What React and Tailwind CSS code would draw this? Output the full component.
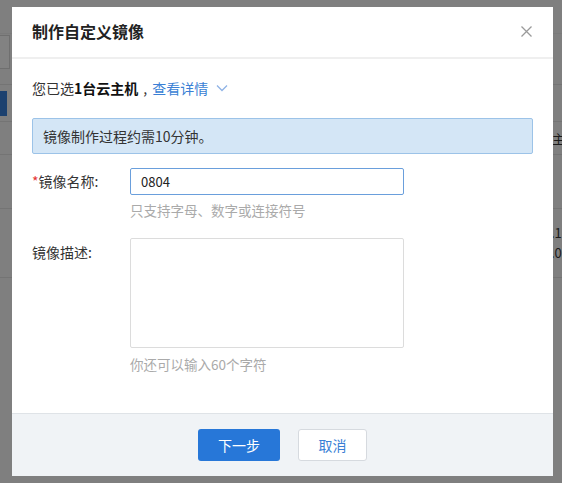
import React from "react";

const FONT = { fontFamily: '"Noto Sans CJK SC", "Noto Sans", sans-serif' };

function Chevron() {
  return (
    <svg width="12" height="8" viewBox="0 0 12 8" className="ml-[8px]">
      <path d="M1 1.5 L6 6.5 L11 1.5" fill="none" stroke="#8fb3e6" strokeWidth="1.3" />
    </svg>
  );
}

function CloseIcon() {
  return (
    <svg width="11" height="11" viewBox="0 0 11 11">
      <path d="M0.5 0.5 L10.5 10.5 M10.5 0.5 L0.5 10.5" stroke="#9a9a9a" strokeWidth="1.3" />
    </svg>
  );
}

function Background() {
  return (
    <div className="flex flex-col w-[562px] h-[483px] bg-[#7f7f7f] text-[13px] text-[#1a1a1a] overflow-hidden" style={FONT}>
      <div className="h-[34px] border-b border-[#7a7a7a]" />
      <div className="h-[50px] flex items-start pt-[1px]">
        <div className="w-[10px] h-[34px] border border-l-0 border-[#6f6f6f] bg-[#828282]" />
      </div>
      <div className="h-[37px] border-t border-[#747474] flex items-center">
        <div className="w-[7px] h-[25px] bg-[#1c416f]" />
      </div>
      <div className="h-[33px] border-t border-[#747474] flex items-center pl-[552px] leading-none whitespace-nowrap">主机</div>
      <div className="h-[54px] border-t border-[#747474]" />
      <div className="h-[69px] border-t border-[#747474] flex flex-col justify-center pl-[551px] leading-[20px] whitespace-nowrap">
        <span>.1</span>
        <span>.0</span>
      </div>
      <div className="flex-1 border-t border-[#747474]" />
    </div>
  );
}

export default function App() {
  return (
    <div className="relative w-[562px] h-[483px] overflow-hidden" style={FONT}>
      <Background />
      <div className="absolute left-[12px] top-[7px] w-[541px] h-[469px] bg-white flex flex-col text-[#333]">
        <div className="h-[52px] border-b-2 border-[#efefef] flex items-center justify-between pl-[20px] pr-[21px] pb-[2px]">
          <span className="text-[16px] font-bold text-[#222]">制作自定义镜像</span>
          <CloseIcon />
        </div>
        <div className="px-[20px] flex flex-col">
          <div className="mt-[19px] h-[20px] flex items-center text-[14px] leading-[20px]">
            <span>您已选</span>
            <span className="font-bold text-[#111]">1台云主机</span>
            <span className="ml-[5px] mr-[5px]">,</span>
            <span className="text-[#3a7fd5]">查看详情</span>
            <Chevron />
          </div>
          <div className="mt-[20px] h-[36px] border border-[#9cc3e8] bg-[#d4e6f6] rounded-[2px] flex items-center pl-[10px] text-[14px] text-[#333]">
            镜像制作过程约需10分钟。
          </div>
          <div className="mt-[14px] flex items-center">
            <div className="w-[98px] text-[14px] text-[#333]">
              <span className="text-[#e53333]">*</span>镜像名称:
            </div>
            <div className="w-[274px] h-[27px] border border-[#6a9fdc] rounded-[2px] flex items-center pl-[10px] text-[13px] text-[#222]">
              0804
            </div>
          </div>
          <div className="ml-[98px] mt-[5px] text-[13.5px] leading-[20px] text-[#aaa]">只支持字母、数字或连接符号</div>
          <div className="mt-[18px] flex items-start">
            <div className="w-[98px] text-[14px] text-[#333] pt-[4px]">镜像描述:</div>
            <div className="w-[274px] h-[110px] border border-[#dcdcdc] rounded-[2px]" />
          </div>
          <div className="ml-[98px] mt-[6px] text-[13.5px] leading-[20px] text-[#aaa]">你还可以输入60个字符</div>
        </div>
        <div className="mt-auto h-[63px] border-t border-[#dfe3e7] bg-[#f0f3f6] flex items-center justify-center gap-[18px]">
          <button className="w-[82px] h-[32px] rounded-[3px] bg-[#2777d8] text-white text-[14px]">下一步</button>
          <button className="w-[69px] h-[32px] rounded-[3px] bg-white border border-[#d6dadf] text-[#3a7fd5] text-[14px]">取消</button>
        </div>
      </div>
    </div>
  );
}
